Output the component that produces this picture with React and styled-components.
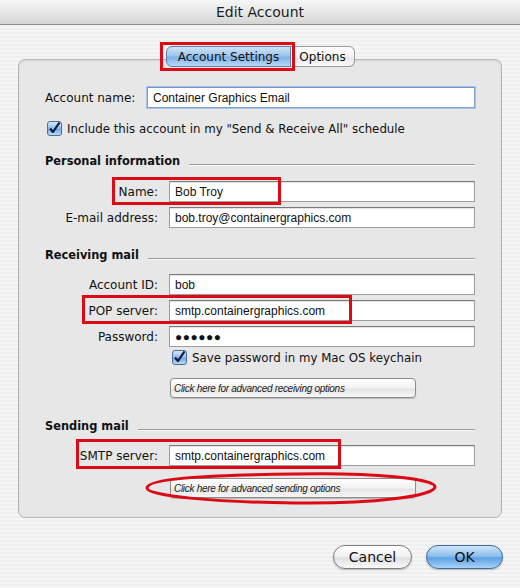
import React from 'react'
import styled, { createGlobalStyle } from 'styled-components'

const GlobalStyle = createGlobalStyle`
  body {
    margin: 0;
    font-family: "DejaVu Sans", "Liberation Sans", sans-serif;
    color: #111;
    background: repeating-linear-gradient(180deg, #efefef 0, #efefef 2px, #f6f6f6 2px, #f6f6f6 4px);
  }
`

const Window = styled.div`
  width: 520px;
  height: 588px;
  overflow: hidden;
`

const TitleBar = styled.div`
  height: 24px;
  border-bottom: 1px solid #8e8e8e;
  background: linear-gradient(180deg, #f6f6f6 0%, #e6e6e6 55%, #d4d4d4 100%);
  display: flex;
  align-items: center;
  justify-content: center;
  font-size: 14px;
  color: #1c1c1c;
`

const TabStrip = styled.div`
  position: relative;
  z-index: 1;
  display: flex;
  justify-content: center;
  margin-top: 21px;
  padding-left: 1px;
`

const TabGroup = styled.div`
  position: relative;
  display: flex;
`

const Tab = styled.div`
  height: 21px;
  width: ${p => p.$w}px;
  box-sizing: border-box;
  display: flex;
  align-items: center;
  justify-content: center;
  font-size: 12px;
  color: #111;
  border: 1px solid ${p => (p.$active ? '#5b7fa8' : '#9a9a9a')};
  border-radius: ${p => (p.$active ? '6px 0 0 6px' : '0 6px 6px 0')};
  border-left-width: ${p => (p.$active ? '1px' : '0')};
  background: ${p =>
    p.$active
      ? 'linear-gradient(180deg, #cfe3f8 0%, #9cc4ec 48%, #7cb0e6 52%, #b8d8f6 100%)'
      : 'linear-gradient(180deg, #ffffff 0%, #f3f3f3 50%, #e6e6e6 52%, #fafafa 100%)'};
`

const Panel = styled.div`
  position: relative;
  margin: -8px 18px 0;
  height: 459px;
  box-sizing: border-box;
  border: 1px solid #b4b4b4;
  border-radius: 7px;
  background: #e7e7e7;
  box-shadow: inset 0 1px 2px rgba(0, 0, 0, 0.08);
  padding: 27px 26px 0;
`

const FieldRow = styled.div`
  position: relative;
  display: grid;
  grid-template-columns: ${p => (p.$first ? '94px 1fr' : '113px 1fr')};
  column-gap: ${p => (p.$first ? '8px' : '11px')};
  align-items: center;
  margin-top: ${p => p.$mt || 0}px;
`

const Label = styled.label`
  font-size: 12px;
  text-align: ${p => (p.$left ? 'left' : 'right')};
  white-space: nowrap;
`

const Input = styled.div`
  height: 21px;
  box-sizing: border-box;
  display: flex;
  align-items: center;
  padding: 0 5px;
  font-family: "Liberation Sans", Arial, sans-serif;
  font-size: 12px;
  color: #111;
  background: #fff;
  border: 1px solid ${p => (p.$focus ? '#7d9fcb' : '#9d9d9d')};
  border-top-color: ${p => (p.$focus ? '#6f93c4' : '#7a7a7a')};
  box-shadow: ${p => (p.$focus ? '0 0 0 1px #a9c4e6' : 'inset 0 1px 1px rgba(0,0,0,0.12)')};
  letter-spacing: ${p => (p.$dots ? '0.5px' : '0')};
`

const CheckRow = styled.div`
  display: flex;
  align-items: center;
  gap: 5px;
  font-size: 11.8px;
  height: 17px;
  margin-top: ${p => p.$mt || 0}px;
  margin-left: ${p => p.$ml || 0}px;
`

const Box = styled.span`
  width: 15px;
  height: 15px;
  box-sizing: border-box;
  border: 1px solid #4d6e98;
  border-radius: 3px;
  background: linear-gradient(180deg, #d6e8fa 0%, #8dbbea 50%, #6ea6e0 55%, #bcdcf8 100%);
  display: flex;
  align-items: center;
  justify-content: center;
`

const SectionHead = styled.div`
  display: flex;
  align-items: center;
  height: 16px;
  margin-top: ${p => p.$mt}px;
  font-size: 11.4px;
  font-weight: bold;
  white-space: nowrap;
`

const Rule = styled.div`
  flex: 1;
  height: 1px;
  margin: 8px 0 0 9px;
  background: #9c9c9c;
  border-bottom: 1px solid #f8f8f8;
`

const OptionsButton = styled.div`
  position: relative;
  width: 246px;
  height: 20px;
  box-sizing: border-box;
  margin: ${p => p.$mt}px 0 0 125px;
  display: flex;
  align-items: center;
  padding-left: 3px;
  border: 1px solid #8c8c8c;
  border-radius: 4px;
  background: linear-gradient(180deg, #ffffff 0%, #f2f2f2 50%, #e4e4e4 55%, #f7f7f7 100%);
  box-shadow: 0 1px 1px rgba(0, 0, 0, 0.2);
  font-family: "Liberation Sans", Arial, sans-serif;
  font-style: italic;
  font-size: 10px;
  letter-spacing: -0.3px;
  color: #222;
`

const Highlight = styled.div`
  position: absolute;
  left: ${p => p.$x}px;
  top: ${p => p.$y}px;
  width: ${p => p.$w}px;
  height: ${p => p.$h}px;
  border: 3px solid #dc0a14;
  box-sizing: border-box;
  pointer-events: none;
`

const Ellipse = styled.svg`
  position: absolute;
  left: -27px;
  top: -8px;
  overflow: visible;
  pointer-events: none;
`

const Footer = styled.div`
  display: flex;
  justify-content: flex-end;
  gap: 14px;
  margin-top: 27px;
  padding-right: 17px;
`

const PushButton = styled.div`
  width: ${p => p.$w}px;
  height: 24px;
  box-sizing: border-box;
  border-radius: 12px;
  display: flex;
  align-items: center;
  justify-content: center;
  font-size: 14px;
  color: #111;
  border: 1px solid ${p => (p.$primary ? '#3f6a9c' : '#7d7d7d')};
  background: ${p =>
    p.$primary
      ? 'linear-gradient(180deg, #cfe4fa 0%, #8ec0ee 45%, #5fa2e4 55%, #a9d4fa 100%)'
      : 'linear-gradient(180deg, #ffffff 0%, #f2f2f2 45%, #e0e0e0 55%, #fafafa 100%)'};
  box-shadow: 0 1px 2px rgba(0, 0, 0, 0.25);
`

const Check = () => (
  <Box>
    <svg width="13" height="13" viewBox="0 0 13 13">
      <path d="M2 6.5 L5 10 L11.5 0.5" fill="none" stroke="#0d1a3a" strokeWidth="2.2" strokeLinejoin="round" />
    </svg>
  </Box>
)

const Field = ({ label, value, mt, mark, dots }) => (
  <FieldRow $mt={mt}>
    <Label>{label}</Label>
    <Input $dots={dots}>{value}</Input>
    {mark && <Highlight $x={mark[0]} $y={mark[1]} $w={mark[2]} $h={mark[3]} />}
  </FieldRow>
)

export default function App() {
  return (
    <Window>
      <GlobalStyle />
      <TitleBar>Edit Account</TitleBar>
      <TabStrip>
        <TabGroup>
          <Tab $active $w={125}>Account Settings</Tab>
          <Tab $w={64}>Options</Tab>
          <Highlight $x={-6} $y={-4} $w={135} $h={29} />
        </TabGroup>
      </TabStrip>
      <Panel>
        <FieldRow $first>
          <Label $left>Account name:</Label>
          <Input $focus>Container Graphics Email</Input>
        </FieldRow>
        <CheckRow $mt={12} $ml={2}>
          <Check />
          <span>Include this account in my "Send &amp; Receive All" schedule</span>
        </CheckRow>

        <SectionHead $mt={16}>Personal information<Rule /></SectionHead>
        <Field label="Name:" value="Bob Troy" mt={12} mark={[67, -4, 169, 28]} />
        <Field label="E-mail address:" value="bob.troy@containergraphics.com" mt={5} />

        <SectionHead $mt={19}>Receiving mail<Rule /></SectionHead>
        <Field label="Account ID:" value="bob" mt={11} />
        <Field label="POP server:" value="smtp.containergraphics.com" mt={5} mark={[37, -5, 270, 29]} />
        <Field label="Password:" value="●●●●●●" mt={5} dots />
        <CheckRow $mt={2} $ml={127}>
          <Check />
          <span>Save password in my Mac OS keychain</span>
        </CheckRow>
        <OptionsButton $mt={12}>Click here for advanced receiving options</OptionsButton>

        <SectionHead $mt={20}>Sending mail<Rule /></SectionHead>
        <Field label="SMTP server:" value="smtp.containergraphics.com" mt={11} mark={[31, -6, 265, 30]} />
        <OptionsButton $mt={12}>
          Click here for advanced sending options
          <Ellipse width="300" height="34" viewBox="0 0 300 34">
            <path
              d="M150 3 C230 1 292 8 291 16 C290 25 230 33 150 32 C70 31 3 25 3 17 C3 8 60 4 150 3 Z"
              fill="none"
              stroke="#dc0a14"
              strokeWidth="3"
            />
          </Ellipse>
        </OptionsButton>
      </Panel>
      <Footer>
        <PushButton $w={79}>Cancel</PushButton>
        <PushButton $primary $w={77}>OK</PushButton>
      </Footer>
    </Window>
  )
}
